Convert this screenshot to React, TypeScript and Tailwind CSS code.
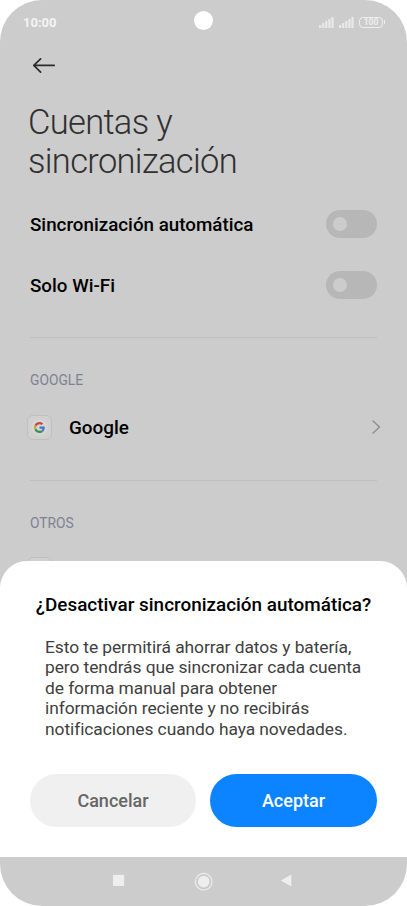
import type { ReactNode } from "react";

const signalBars = [3, 5, 7, 9, 11];

export default function App() {
  return (
    <div className="h-[906px] w-[407px] overflow-hidden bg-white font-[Roboto,sans-serif]">
      <div className="flex h-full flex-col overflow-hidden rounded-[42px] bg-[#cccccc]">
        <div className="flex h-[560.5px] shrink-0 flex-col">
          <StatusBar />
          <AccountSettings />
        </div>
        <ConfirmSheet />
        <NavigationBar />
      </div>
    </div>
  );
}

function StatusBar() {
  return (
    <header className="grid h-[42px] shrink-0 grid-cols-[1fr_19px_1fr] items-center pr-[23px] pl-[23px]">
      <span className="mt-1 text-[13px] leading-4 font-bold text-[#f4f4f4]">
        10:00
      </span>
      <span className="-mt-px size-[19px] rounded-full bg-white" />
      <div className="mt-[3px] flex items-center justify-end gap-[5px]">
        <Signal />
        <Signal />
        <div className="relative mr-px flex h-[11px] w-[24px] items-center justify-center rounded-[4px] border-[1.5px] border-[#eeeeee] text-[8.5px] leading-none font-bold text-[#eeeeee]">
          100
          <span className="absolute top-[2px] -right-[3px] h-1 w-px bg-[#eeeeee]" />
        </div>
      </div>
    </header>
  );
}

function Signal() {
  return (
    <svg className="h-[11px] w-[15px]" viewBox="0 0 15 11" fill="#e9e9e9">
      {signalBars.map((height, index) => (
        <rect
          key={height}
          x={index * 3.1}
          y={11 - height}
          width="2.2"
          height={height}
        />
      ))}
    </svg>
  );
}

function AccountSettings() {
  return (
    <main className="flex min-h-0 flex-1 flex-col overflow-hidden px-[30px]">
      <div className="flex h-[61px] shrink-0 pt-[14px]">
        <svg
          className="ml-[2px] h-[18px] w-6"
          viewBox="0 0 24 18"
          fill="none"
          stroke="#2b2b2b"
          strokeWidth="1.7"
          strokeLinecap="round"
          strokeLinejoin="round"
        >
          <path d="M22.2 9.4H1.8M8.6 2.8 1.8 9.4l6.8 6.7" />
        </svg>
      </div>
      <h1 className="-ml-[2px] h-[78px] w-[260px] shrink-0 text-[34.5px] leading-[39px] font-light tracking-[-0.68px] text-[#303030]">
        Cuentas y sincronización
      </h1>
      <div className="mt-[13px] shrink-0">
        <ToggleRow label="Sincronización automática" />
        <ToggleRow label="Solo Wi-Fi" />
      </div>
      <hr className="mt-[22px] shrink-0 border-[#bfbfbf]" />
      <AccountGroup title="GOOGLE">
        <div className="-mr-[4px] -ml-[3px] flex h-[26px] items-center">
          <span className="flex size-[25px] items-center justify-center rounded-[6px] border border-[#bfbfbf] bg-[#d0d0d0]">
            <GoogleLogo />
          </span>
          <span className="mt-[2px] ml-[17px] flex-1 text-[18.9px] leading-6 font-medium text-black">
            Google
          </span>
          <svg
            className="h-4 w-[10px]"
            viewBox="0 0 10 16"
            fill="none"
            stroke="#8c8c8c"
            strokeWidth="1.3"
          >
            <path d="m1.5 1.5 7 6.5-7 6.5" />
          </svg>
        </div>
      </AccountGroup>
      <hr className="mt-[40px] shrink-0 border-[#bfbfbf]" />
      <AccountGroup title="OTROS">
        <span className="-ml-[3px] block size-[25px] rounded-[6px] border border-[#bfbfbf] bg-[#d0d0d0]" />
      </AccountGroup>
    </main>
  );
}

function ToggleRow({ label }: { label: string }) {
  return (
    <div className="flex h-[60.5px] items-center justify-between">
      <span className="mt-[2px] text-[18.8px] leading-6 font-medium text-black">
        {label}
      </span>
      <span className="flex h-7 w-[51px] items-center rounded-full bg-[#b7b7b7] pl-[7px]">
        <span className="size-[14px] rounded-full bg-[#cccccc]" />
      </span>
    </div>
  );
}

function AccountGroup({
  title,
  children,
}: {
  title: string;
  children: ReactNode;
}) {
  return (
    <section className="shrink-0 pt-[34px]">
      <h2 className="mb-[26px] text-[13.8px] leading-4 text-[#7e8293]">
        {title}
      </h2>
      {children}
    </section>
  );
}

function GoogleLogo() {
  return (
    <span className="flex size-[17px] items-center justify-center rounded-full bg-[#d6d6d6]">
      <svg className="size-[11px]" viewBox="0 0 48 48">
        <path
          fill="#c94b40"
          d="M24 9.5c3.5 0 6.7 1.2 9.2 3.6l6.9-6.9C35.9 2.4 30.5 0 24 0 14.6 0 6.5 5.4 2.6 13.2l8 6.2C12.4 13.7 17.7 9.5 24 9.5z"
        />
        <path
          fill="#4577c4"
          d="M47 24.5c0-1.6-.2-3.1-.4-4.5H24v9h12.9c-.6 3-2.2 5.500-4.700 7.200l7.700 6C44.400 38 47 31.800 47 24.500z"
        />
        <path
          fill="#d3a52d"
          d="M10.500 28.600c-.5-1.500-.8-3-.8-4.600s.3-3.100.8-4.600l-8-6.200C.9 16.500 0 20.100 0 24s.9 7.500 2.600 10.800z"
        />
        <path
          fill="#38915a"
          d="M24 48c6.500 0 11.900-2.100 15.900-5.800l-7.700-6c-2.200 1.500-4.900 2.300-8.200 2.300-6.300 0-11.600-4.200-13.500-9.900l-8 6.200C6.500 42.600 14.600 48 24 48z"
        />
      </svg>
    </span>
  );
}

function ConfirmSheet() {
  return (
    <div
      role="dialog"
      className="flex h-[296.5px] shrink-0 flex-col rounded-t-[27px] bg-white px-[30px]"
    >
      <h2 className="mt-[32px] text-center text-[18.9px] leading-6 font-medium whitespace-nowrap text-black">
        ¿Desactivar sincronización automática?
      </h2>
      <p className="mt-[20.5px] ml-[15px] w-[325px] text-[17.4px] leading-[20.4px] tracking-[-0.07px] text-[#404040]">
        Esto te permitirá ahorrar datos y batería,
        <br />
        pero tendrás que sincronizar cada cuenta
        <br />
        de forma manual para obtener
        <br />
        información reciente y no recibirás
        <br />
        notificaciones cuando haya novedades.
      </p>
      <div className="mt-[35px] grid grid-cols-[166px_167px] justify-between text-[18px] font-medium">
        <button
          type="button"
          className="h-[53px] rounded-full bg-[#f0f0f0] text-[#666666]"
        >
          Cancelar
        </button>
        <button
          type="button"
          className="h-[53px] rounded-full bg-[#0d84ff] text-white"
        >
          Aceptar
        </button>
      </div>
    </div>
  );
}

function NavigationBar() {
  return (
    <nav className="flex flex-1 justify-center pt-[15px]">
      <svg
        className="h-5 w-[182px]"
        viewBox="0 0 182 20"
        fill="#eeeeee"
        stroke="#bdbdbd"
        strokeWidth="0.5"
      >
        <rect x="-0.5" y="2.3" width="12.2" height="12" />
        <circle
          cx="90.7"
          cy="9.7"
          r="8.3"
          fill="none"
          stroke="#eeeeee"
          strokeWidth="1.2"
        />
        <circle cx="90.7" cy="9.7" r="6.2" />
        <path d="M167 8.5 178.8 1.8v13.4z" />
      </svg>
    </nav>
  );
}
